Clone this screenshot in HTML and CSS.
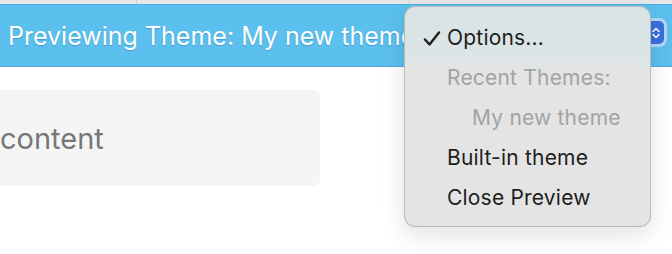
FILE: index.html
```html
<!DOCTYPE html>
<html lang="en">
  <head>
    <meta charset="UTF-8" />
    <title>Theme Preview</title>
    <link rel="stylesheet" href="styles.css">
  </head>
  <body>
    <div class="tabs">
      <div class="tab tab-first"></div>
      <div class="tab tab-second"></div>
      <div class="tab"></div>
    </div>

    <div class="preview-bar">
      <span class="preview-title">Previewing Theme: My new theme</span>
      <span class="select-btn">
        <svg width="10" height="14" viewBox="0 0 10 14">
          <path d="M2 5.5 L5 2.5 L8 5.5 M2 8.5 L5 11.5 L8 8.5" fill="none" stroke="#fff" stroke-width="1.6" stroke-linecap="round" stroke-linejoin="round"/>
        </svg>
      </span>
    </div>

    <div class="main">
      <div class="card">content</div>
    </div>

    <!-- popup menu of the select -->
    <div class="menu">
      <div class="menu-item">
        <svg class="check" width="18" height="16" viewBox="0 0 18 16">
          <path d="M2 8.5 L6.5 13.5 L16 1.5" fill="none" stroke="#1e1e1e" stroke-width="2.4" stroke-linecap="round" stroke-linejoin="round"/>
        </svg>
        Options...
      </div>
      <div class="menu-item disabled">Recent Themes:</div>
      <div class="menu-item disabled indent">My new theme</div>
      <div class="menu-item">Built-in theme</div>
      <div class="menu-item">Close Preview</div>
    </div>
  </body>
</html>
```

FILE: styles.css
```css
* {
  margin: 0;
  padding: 0;
  box-sizing: border-box;
}

body {
  position: relative;
  width: 672px;
  height: 254px;
  overflow: hidden;
  background-color: #fff;
  font-family: Inter, "Liberation Sans", sans-serif;
}

.tabs {
  display: flex;
  height: 4px;
  background-color: #e7e7e7;
}

.tab {
  flex: 1;
}

.tab-first {
  flex: 0 0 137px;
  border-right: 1px solid #d0d0d0;
}

.tab-second {
  flex: 0 0 273px;
  border-right: 1px solid #d0d0d0;
}

.preview-bar {
  display: flex;
  align-items: center;
  justify-content: space-between;
  height: 63px;
  padding: 0 5px 0 8px;
  background-color: #5bc0ee;
  border-top: 1px solid #4eaedd;
  border-bottom: 1px solid #4ea9d6;
}

.preview-title {
  color: #fff;
  font-size: 25px;
  white-space: nowrap;
  text-shadow: 0 1px 1px rgba(0, 40, 80, 0.25);
}

.select-btn {
  display: flex;
  align-items: center;
  justify-content: flex-end;
  width: 30px;
  height: 29px;
  margin-bottom: 6px;
  padding-right: 3px;
  background-color: #3a6fdf;
  border: 3px solid #b7d6f6;
  border-radius: 8px;
}

.main {
  padding-top: 23px;
}

.card {
  width: 360px;
  height: 96px;
  margin-left: -40px;
  padding-left: 40px;
  display: flex;
  align-items: center;
  background-color: #f5f5f5;
  border-radius: 6px;
  color: #777;
  font-size: 29px;
}

.menu {
  position: absolute;
  left: 404px;
  top: 6px;
  width: 247px;
  height: 221px;
  padding: 11px 0 10px;
  background: linear-gradient(#d8e3e4 0, #dde5e6 52px, #e4e4e4 64px, #e4e4e4 100%);
  border: 1px solid rgba(0, 0, 0, 0.18);
  border-radius: 11px;
  box-shadow: 0 8px 24px rgba(0, 0, 0, 0.12);
}

.menu-item {
  position: relative;
  height: 40px;
  line-height: 40px;
  padding-left: 42px;
  font-size: 21px;
  letter-spacing: 0.2px;
  color: #1e1e1e;
  white-space: nowrap;
}

.menu-item.disabled {
  color: #a3a3a3;
}

.menu-item.indent {
  padding-left: 67px;
}

.check {
  position: absolute;
  left: 18px;
  top: 13px;
}
```
